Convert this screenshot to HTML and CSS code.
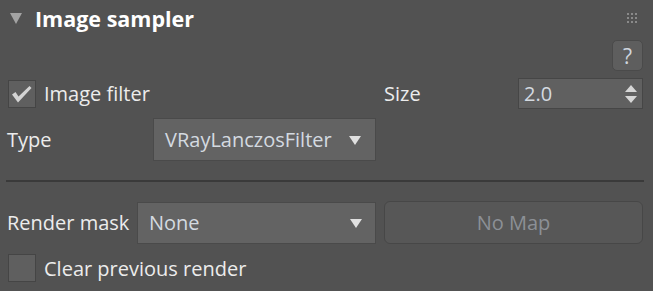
FILE: index.html
```html
<!DOCTYPE html>
<html>
<head>
<meta charset="utf-8">
<link rel="stylesheet" href="styles.css">
</head>
<body>
<div class="panel">
  <div class="header">
    <span class="tri"></span>
    <span class="title">Image sampler</span>
    <svg class="grip" width="11" height="11" viewBox="0 0 11 11">
      <g fill="#8a8a8a">
        <rect x="0" y="0" width="2" height="2"/><rect x="4" y="0" width="2" height="2"/><rect x="8" y="0" width="2" height="2"/>
        <rect x="0" y="4" width="2" height="2"/><rect x="4" y="4" width="2" height="2"/><rect x="8" y="4" width="2" height="2"/>
        <rect x="0" y="8" width="2" height="2"/><rect x="4" y="8" width="2" height="2"/><rect x="8" y="8" width="2" height="2"/>
      </g>
    </svg>
  </div>
  <div class="help-row"><div class="help">?</div></div>
  <div class="row row-filter">
    <div class="check-wrap">
      <span class="checkbox">
        <svg width="28" height="28" viewBox="0 0 28 28"><path d="M4 14.5 L7.5 12 L10.5 16.5 L21.5 6 L23.5 8 L10 22.5 Z" fill="#d4d4d4"/></svg>
      </span>
      <span class="label">Image filter</span>
    </div>
    <span class="label">Size</span>
    <div class="spinner">
      <span class="value">2.0</span>
      <svg width="12" height="20" viewBox="0 0 12 20"><path d="M0 8 L6 1 L12 8 Z M0 12 L6 19 L12 12 Z" fill="#d6d6d6"/></svg>
    </div>
  </div>
  <div class="row row-type">
    <span class="label">Type</span>
    <div class="dropdown dd-type">
      <span class="value">VRayLanczosFilter</span>
      <span class="arrow"></span>
    </div>
  </div>
  <div class="sep"></div>
  <div class="row row-mask">
    <span class="label">Render mask</span>
    <div class="dropdown dd-mask">
      <span class="value">None</span>
      <span class="arrow"></span>
    </div>
    <div class="nomap">No Map</div>
  </div>
  <div class="row row-clear">
    <span class="checkbox"></span>
    <span class="label">Clear previous render</span>
  </div>
</div>
</body>
</html>
```
FILE: styles.css
```css
html, body {
  margin: 0;
  padding: 0;
  background: #525252;
}
.panel {
  width: 653px;
  height: 291px;
  box-sizing: border-box;
  font-family: "Open Sans", "DejaVu Sans", sans-serif;
  font-size: 20px;
  color: #ececec;
  background: #525252;
  overflow: hidden;
}
.header {
  height: 36px;
  display: flex;
  align-items: center;
  padding-left: 10px;
  padding-right: 15px;
}
.tri {
  width: 0;
  height: 0;
  border-left: 6.5px solid transparent;
  border-right: 6.5px solid transparent;
  border-top: 11px solid #a3a3a3;
  margin-top: 1px;
}
.title {
  font-weight: bold;
  font-size: 21.5px;
  color: #ffffff;
  margin-left: 13px;
  flex: 1;
}
.grip {
  display: block;
}
.help-row {
  display: flex;
  justify-content: flex-end;
  padding-right: 10px;
  margin-top: 4px;
  height: 31px;
}
.help {
  width: 31px;
  height: 31px;
  box-sizing: border-box;
  background: #5e5e5e;
  border: 1px solid #4a4a4a;
  border-radius: 5px;
  color: #cfd6de;
  font-size: 21px;
  display: flex;
  align-items: center;
  justify-content: center;
}
.row {
  display: flex;
  align-items: center;
}
.label {
  white-space: nowrap;
}
.row-filter {
  margin-top: 7px;
  height: 31px;
  display: grid;
  grid-template-columns: 384px 134px 125px;
}
.check-wrap {
  display: flex;
  align-items: center;
  padding-left: 8px;
  gap: 8px;
}
.checkbox {
  width: 28px;
  height: 28px;
  box-sizing: border-box;
  background: #5f5f5f;
  border: 1px solid #454545;
  display: block;
  flex: none;
}
.checkbox svg {
  display: block;
  margin: -1px;
}
.spinner {
  height: 31px;
  box-sizing: border-box;
  background: #606060;
  border: 1px solid #464646;
  display: flex;
  align-items: center;
  justify-content: space-between;
  padding: 0 5px 0 5px;
}
.value {
  color: #d4dae0;
}
.row-type {
  margin-top: 9px;
  height: 43px;
  padding-left: 7px;
}
.row-type .label {
  width: 146px;
}
.dropdown {
  box-sizing: border-box;
  background: #636363;
  border: 1px solid #4a4a4a;
  display: flex;
  align-items: center;
  justify-content: space-between;
  padding: 0 14px 0 11px;
}
.dd-type {
  width: 223px;
  height: 43px;
}
.arrow {
  width: 0;
  height: 0;
  border-left: 6.5px solid transparent;
  border-right: 6.5px solid transparent;
  border-top: 9px solid #e0e0e0;
  margin-top: 1px;
}
.sep {
  margin: 19px 9px 0 6px;
  height: 2px;
  background: #3a3a3a;
}
.row-mask {
  margin-top: 19px;
  height: 43px;
  padding-left: 7px;
}
.row-mask .label {
  width: 130px;
  flex: none;
}
.dd-mask {
  width: 239px;
  height: 42px;
  padding-left: 11px;
  padding-right: 13px;
  flex: none;
}
.nomap {
  margin-left: 8px;
  width: 259px;
  height: 43px;
  box-sizing: border-box;
  background: #575757;
  border: 1px solid #474747;
  border-radius: 6px;
  color: #8c9096;
  display: flex;
  align-items: center;
  justify-content: center;
  flex: none;
}
.row-clear {
  margin-top: 10px;
  height: 28px;
  padding-left: 8px;
  gap: 8px;
}
```
